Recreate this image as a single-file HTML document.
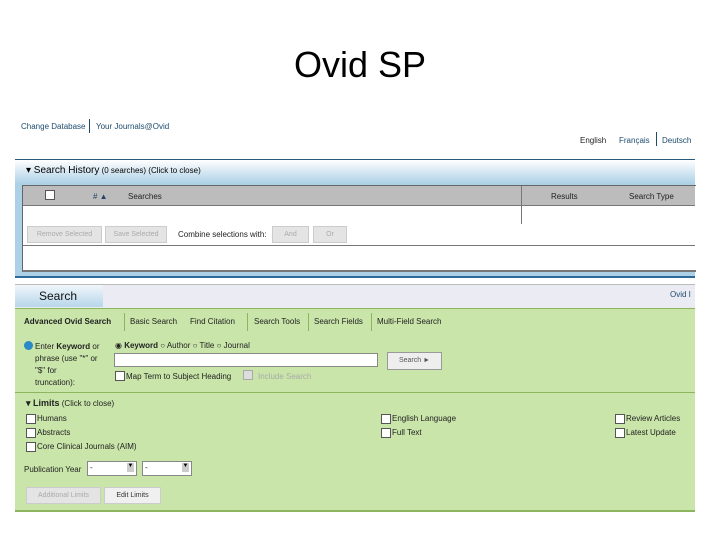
<!DOCTYPE html><html><head><style>
body{margin:0;width:720px;height:540px;background:#fff;font-family:"Liberation Sans",sans-serif;position:relative;overflow:hidden}
.a{position:absolute;white-space:nowrap}
.s{font-size:8px;color:#222}
.cb{position:absolute;width:8px;height:8px;background:#fff;border:1px solid #555}
.btn{position:absolute;background:#e4e4e4;border:1px solid #ccc;font-size:7px;color:#aaa;text-align:center}
</style></head><body>
<div class="a" style="left:0;width:720px;top:44px;text-align:center;font-size:36px;color:#000">Ovid SP</div>
<div class="a s" style="left:21px;top:122px;color:#1d4b6e">Change Database</div>
<div class="a" style="left:89px;top:119px;width:1px;height:14px;background:#1d4b6e"></div>
<div class="a s" style="left:96px;top:122px;color:#1d4b6e">Your Journals@Ovid</div>
<div class="a s" style="left:580px;top:136px">English</div>
<div class="a s" style="left:619px;top:136px;color:#1d4b6e">Français</div>
<div class="a" style="left:656px;top:132px;width:1px;height:14px;background:#1d4b6e"></div>
<div class="a s" style="left:662px;top:136px;color:#1d4b6e">Deutsch</div>
<!-- search history -->
<div class="a" style="left:15px;top:159px;width:680px;height:116px;background:#acd0e6;border-top:1px solid #2b5b7a;border-bottom:2px solid #2b6a9a"></div>
<div class="a" style="left:15px;top:160px;width:680px;height:24px;background:linear-gradient(#fff,#acd0e6)"></div>
<div class="a" style="left:26px;top:165px;font-size:8px"><span style="font-size:10px">▾ Search History</span> (0 searches) (Click to close)</div>
<div class="a" style="left:22px;top:185px;width:673px;height:84px;background:#fff;border-left:1px solid #666;border-top:1px solid #666;border-bottom:2px solid #777"></div>
<div class="a" style="left:23px;top:186px;width:672px;height:19px;background:#bcbcbc;border-bottom:1px solid #777"></div>
<div class="cb" style="left:45px;top:190px"></div>
<div class="a s" style="left:93px;top:192px;color:#246">#&nbsp;▲</div>
<div class="a s" style="left:128px;top:192px">Searches</div>
<div class="a" style="left:521px;top:186px;width:1px;height:38px;background:#777"></div>
<div class="a s" style="left:551px;top:192px">Results</div>
<div class="a s" style="left:629px;top:192px">Search Type</div>
<div class="btn" style="left:27px;top:226px;width:73px;height:15px;line-height:15px">Remove Selected</div>
<div class="btn" style="left:105px;top:226px;width:60px;height:15px;line-height:15px">Save Selected</div>
<div class="a s" style="left:178px;top:230px">Combine selections with:</div>
<div class="btn" style="left:272px;top:226px;width:35px;height:15px;line-height:15px">And</div>
<div class="btn" style="left:313px;top:226px;width:32px;height:15px;line-height:15px">Or</div>
<div class="a" style="left:23px;top:245px;width:672px;height:1px;background:#777"></div>
<!-- search -->
<div class="a" style="left:15px;top:284px;width:680px;height:23px;background:#ebebf3;border-top:1px solid #bbb;border-bottom:2px solid #8db560"></div>
<div class="a" style="left:15px;top:285px;width:88px;height:22px;background:linear-gradient(#f0f6fb,#b7d6ea)"></div>
<div class="a" style="left:39px;top:289px;font-size:12px;color:#111">Search</div>
<div class="a s" style="left:670px;top:290px;color:#1d4b6e">Ovid I</div>
<div class="a" style="left:15px;top:309px;width:680px;height:201px;background:#c9e5a9;border-bottom:2px solid #8db560"></div>
<div class="a" style="left:15px;top:392px;width:680px;height:1px;background:#8db560"></div>
<div class="a s" style="left:24px;top:317px;font-weight:bold">Advanced Ovid Search</div>
<div class="a" style="left:124px;top:313px;width:1px;height:18px;background:#8db560"></div>
<div class="a s" style="left:130px;top:317px">Basic Search</div>
<div class="a s" style="left:190px;top:317px">Find Citation</div>
<div class="a" style="left:247px;top:313px;width:1px;height:18px;background:#8db560"></div>
<div class="a s" style="left:254px;top:317px">Search Tools</div>
<div class="a" style="left:308px;top:313px;width:1px;height:18px;background:#8db560"></div>
<div class="a s" style="left:314px;top:317px">Search Fields</div>
<div class="a" style="left:371px;top:313px;width:1px;height:18px;background:#8db560"></div>
<div class="a s" style="left:377px;top:317px">Multi-Field Search</div>
<div class="a" style="left:24px;top:341px;width:9px;height:9px;border-radius:50%;background:#2a8ac8"></div>
<div class="a s" style="left:35px;top:341px;line-height:12px">Enter <b>Keyword</b> or<br>phrase (use "*" or<br>"$" for<br>truncation):</div>
<div class="a s" style="left:115px;top:341px">◉ <b>Keyword</b> ○ Author ○ Title ○ Journal</div>
<div class="a" style="left:114px;top:353px;width:262px;height:12px;background:#fff;border:1px solid #888"></div>
<div class="btn" style="left:387px;top:352px;width:53px;height:16px;line-height:16px;color:#555;background:#eee;border-color:#999">Search ►</div>
<div class="cb" style="left:115px;top:371px"></div>
<div class="a s" style="left:126px;top:372px">Map Term to Subject Heading</div>
<div class="cb" style="left:243px;top:370px;background:#ddd;border-color:#aaa"></div>
<div class="a s" style="left:258px;top:372px;color:#aaa">Include Search</div>
<div class="a s" style="left:26px;top:398px"><b style="font-size:9px">▾ Limits</b> (Click to close)</div>
<div class="cb" style="left:26px;top:414px"></div><div class="a s" style="left:37px;top:414px">Humans</div>
<div class="cb" style="left:26px;top:428px"></div><div class="a s" style="left:37px;top:428px">Abstracts</div>
<div class="cb" style="left:26px;top:442px"></div><div class="a s" style="left:37px;top:442px">Core Clinical Journals (AIM)</div>
<div class="cb" style="left:381px;top:414px"></div><div class="a s" style="left:392px;top:414px">English Language</div>
<div class="cb" style="left:381px;top:428px"></div><div class="a s" style="left:392px;top:428px">Full Text</div>
<div class="cb" style="left:615px;top:414px"></div><div class="a s" style="left:626px;top:414px">Review Articles</div>
<div class="cb" style="left:615px;top:428px"></div><div class="a s" style="left:626px;top:428px">Latest Update</div>
<div class="a s" style="left:24px;top:465px">Publication Year</div>
<div class="a" style="left:87px;top:461px;width:48px;height:13px;background:#fff;border:1px solid #888"></div>
<div class="a" style="left:127px;top:463px;width:7px;height:9px;background:#ccc;font-size:6px;text-align:center">▼</div>
<div class="a" style="left:142px;top:461px;width:48px;height:13px;background:#fff;border:1px solid #888"></div>
<div class="a" style="left:182px;top:463px;width:7px;height:9px;background:#ccc;font-size:6px;text-align:center">▼</div>
<div class="a s" style="left:90px;top:463px">-</div><div class="a s" style="left:145px;top:463px">-</div>
<div class="btn" style="left:26px;top:487px;width:73px;height:15px;line-height:15px">Additional Limits</div>
<div class="btn" style="left:104px;top:487px;width:55px;height:15px;line-height:15px;color:#333;background:#f0f0f0">Edit Limits</div>
</body></html>
